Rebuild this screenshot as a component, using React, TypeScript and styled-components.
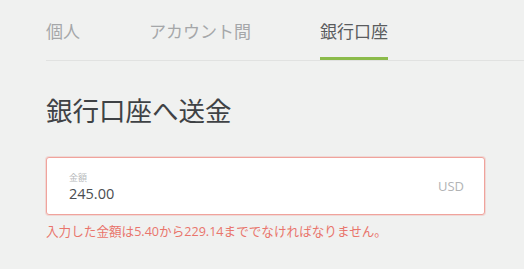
import React from "react";
import styled, { createGlobalStyle } from "styled-components";

const Global = createGlobalStyle`
  html, body {
    margin: 0;
    padding: 0;
    background: #f0f1f0;
  }
  body {
    font-family: "Open Sans", "Noto Sans CJK JP", sans-serif;
  }
`;

const Page = styled.div`
  padding-left: 46px;
  width: 478px;
`;

const Tabs = styled.nav`
  display: flex;
  gap: 69px;
  height: 60px;
  border-bottom: 1px solid #e1e2e1;
`;

const Tab = styled.div<{ $active?: boolean }>`
  display: flex;
  align-items: center;
  height: 100%;
  box-sizing: border-box;
  padding-top: 3px;
  font-size: 17px;
  color: ${(p) => (p.$active ? "#5a5c5e" : "#a5a7a9")};
  border-bottom: 3px solid ${(p) => (p.$active ? "#8bbb4a" : "transparent")};
`;

const Title = styled.h1`
  margin: 31px 0 0;
  font-size: 26.5px;
  font-weight: 400;
  line-height: 38px;
  color: #3f4245;
`;

const Field = styled.div`
  margin-top: 27px;
  width: 439px;
  height: 58px;
  box-sizing: border-box;
  display: flex;
  align-items: center;
  justify-content: space-between;
  padding: 0 20px 0 22px;
  background: #fff;
  border: 1px solid #f0a39c;
  border-radius: 3px;
  box-shadow: 0 0 0 1px rgba(240, 163, 156, 0.3);
`;

const Values = styled.div`
  display: flex;
  flex-direction: column;
  padding-top: 4px;
`;

const Label = styled.span`
  font-size: 9px;
  line-height: 12px;
  color: #b8babc;
`;

const Amount = styled.span`
  font-size: 14.5px;
  line-height: 20px;
  color: #4a4d50;
`;

const Currency = styled.span`
  font-size: 13px;
  color: #b1b3b5;
`;

const Error = styled.div`
  margin-top: 6px;
  font-size: 12.6px;
  color: #e9756c;
`;

export default function App() {
  return (
    <>
      <Global />
      <Page>
        <Tabs>
          <Tab>個人</Tab>
          <Tab>アカウント間</Tab>
          <Tab $active>銀行口座</Tab>
        </Tabs>
        <Title>銀行口座へ送金</Title>
        <Field>
          <Values>
            <Label>金額</Label>
            <Amount>245.00</Amount>
          </Values>
          <Currency>USD</Currency>
        </Field>
        <Error>入力した金額は5.40から229.14まででなければなりません。</Error>
      </Page>
    </>
  );
}
